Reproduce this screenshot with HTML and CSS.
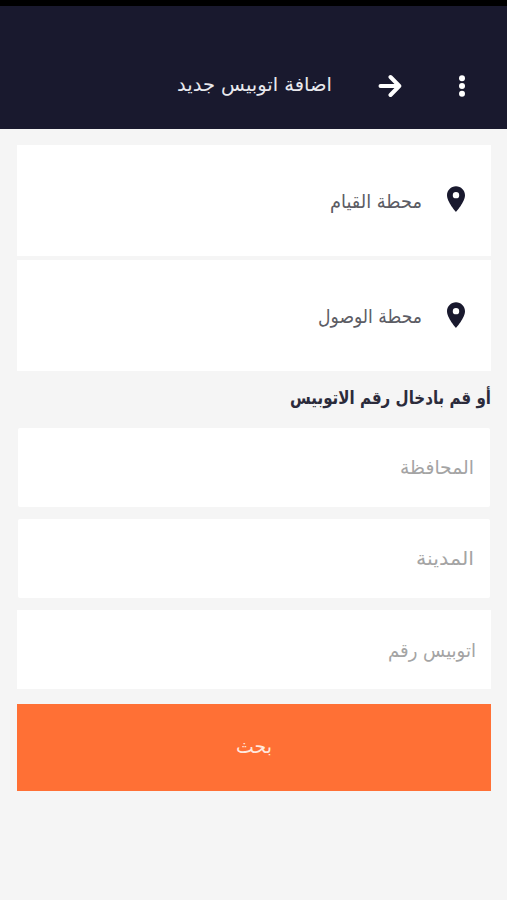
FILE: index.html
```html
<!DOCTYPE html>
<html lang="ar" dir="rtl">
<head>
<meta charset="utf-8">
<title>اضافة اتوبيس جديد</title>
<link rel="stylesheet" href="styles.css">
</head>
<body>
<header class="bar">
  <svg class="dots" viewBox="0 0 8 24"><circle cx="4" cy="4.300" r="3"/><circle cx="4" cy="12" r="3"/><circle cx="4" cy="19.700" r="3"/></svg>
  <svg class="arrow" viewBox="0 0 24 24"><path d="M2.500 12H20.500M12.500 3L21.300 12L12.500 21"/></svg>
  <h1 class="title"><svg class="fit" width="155" height="40"><text x="155" y="25" textLength="155" lengthAdjust="spacingAndGlyphs">اضافة اتوبيس جديد</text></svg></h1>
</header>
<main class="content">
  <div class="station first"><svg class="pin" viewBox="5 2 14 20"><path d="M12 2C8.130 2 5 5.130 5 9c0 5.250 7 13 7 13s7-7.750 7-13c0-3.870-3.130-7-7-7zm0 9.500a2.500 2.500 0 1 1 0-5 2.500 2.500 0 0 1 0 5z"/></svg><svg class="fit" width="92" height="40"><text x="92" y="27" textLength="92" lengthAdjust="spacingAndGlyphs">محطة القيام</text></svg></div>
  <div class="station"><svg class="pin" viewBox="5 2 14 20"><path d="M12 2C8.130 2 5 5.130 5 9c0 5.250 7 13 7 13s7-7.750 7-13c0-3.870-3.130-7-7-7zm0 9.500a2.500 2.500 0 1 1 0-5 2.500 2.500 0 0 1 0 5z"/></svg><svg class="fit" width="104" height="40"><text x="104" y="27" textLength="104" lengthAdjust="spacingAndGlyphs">محطة الوصول</text></svg></div>
  <h2 class="or"><svg class="fit" width="201" height="40"><text x="201" y="26" textLength="201" lengthAdjust="spacingAndGlyphs">أو قم بادخال رقم الاتوبيس</text></svg></h2>
  <div class="field inset"><svg class="fit" width="74" height="40"><text x="74" y="26" textLength="74" lengthAdjust="spacingAndGlyphs">المحافظة</text></svg></div>
  <div class="field inset"><svg class="fit" width="58" height="40"><text x="58" y="26" textLength="58" lengthAdjust="spacingAndGlyphs">المدينة</text></svg></div>
  <div class="field last"><svg class="fit" width="88" height="40"><text x="88" y="27" textLength="88" lengthAdjust="spacingAndGlyphs">اتوبيس رقم</text></svg></div>
  <button class="search"><svg class="fit" width="36" height="40"><text x="36" y="25" textLength="36" lengthAdjust="spacingAndGlyphs">بحث</text></svg></button>
</main>
</body>
</html>
```
FILE: styles.css
```css
*{box-sizing:border-box}
body{margin:0;height:900px;background:#f5f5f5;font-family:"DejaVu Sans",sans-serif;font-size:19px}
.fit{display:block;overflow:visible;fill:currentColor}
.fit text{text-anchor:start;direction:rtl}
.bar{height:129px;border-top:6px solid #000;background:#19192e;color:#e9e9ee;display:flex;align-items:center;padding:37px 41px 0 0}
.dots{width:8px;height:24px;fill:#fff}
.arrow{width:24px;height:24px;margin-right:56px;fill:none;stroke:#fff;stroke-width:4;stroke-linecap:round;stroke-linejoin:round}
.title{margin:0 46px 0 0;font-size:19px;font-weight:400}
.content{padding:16px 16px 0 17px}
.station{height:111px;background:#fff;margin-bottom:4px;display:flex;align-items:center;padding-right:26px;color:#5c5c64}
.pin{width:18px;height:26px;fill:#19192e;margin:0 0 1px 25px}
.first .pin{margin-bottom:3px}
.or{margin:-4px 0 0;height:57px;padding-bottom:3px;display:flex;align-items:center;font-size:18px;color:#2b2b3b}
.field{height:79px;margin:0 0 12px;background:#fff;display:flex;align-items:center;padding-right:15px;color:#a4a4a4}
.inset{margin-right:1px;margin-left:1px;border-radius:2px;padding-right:16px}
.last{margin-bottom:15px}
.search{display:flex;width:100%;height:87px;border:0;padding:0;background:#ff7035;color:#ffe9df;align-items:center;justify-content:center;font:inherit}
```
